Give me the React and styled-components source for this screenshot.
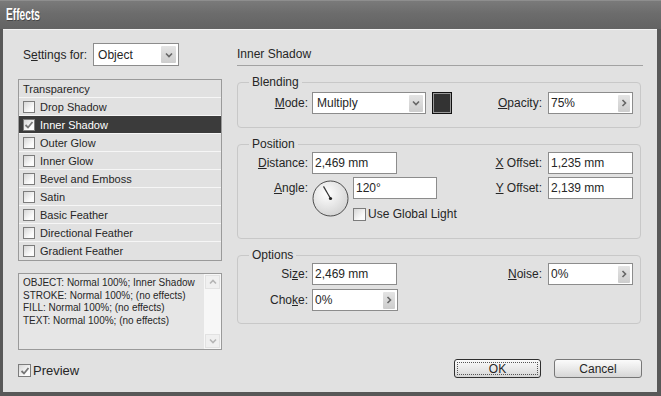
import React from "react";
import styled, { createGlobalStyle } from "styled-components";

const GlobalStyle = createGlobalStyle`
  html, body { margin: 0; padding: 0; background: #fff; }
  body {
    font-family: "Liberation Sans", Arial, sans-serif;
    font-size: 12px;
    color: #262626;
  }
  * { box-sizing: border-box; }
`;

const Window = styled.div`
  width: 661px;
  height: 396px;
  display: flex;
  flex-direction: column;
  background: #585858;
  overflow: hidden;
`;

const TitleBar = styled.div`
  height: 29px;
  flex: none;
  display: flex;
  align-items: center;
  padding-left: 6px;
  border-top: 1px solid #8e8e8e;
  background: linear-gradient(#7a7a7a 0, #6c6c6c 45%, #636363 100%);
`;

const Title = styled.span`
  display: inline-block;
  color: #fff;
  font-weight: bold;
  font-size: 17px;
  transform: scaleX(0.6);
  transform-origin: left center;
  text-shadow: 1px 1px 0 rgba(0, 0, 0, 0.35);
`;

const Body = styled.div`
  flex: 1;
  margin: 0 4px 4px 3px;
  background: #e1e1e1;
  border-top: 1px solid #f3f3f3;
  display: flex;
  gap: 15px;
  padding: 13px 14px 0 15px;
`;

const LeftPane = styled.div`
  width: 204px;
  display: flex;
  flex-direction: column;
`;

const SettingsRow = styled.div`
  height: 23px;
  display: flex;
  align-items: center;
  gap: 6px;
  padding-left: 5px;
`;

const SelectBox = styled.div`
  width: ${(p) => p.$w}px;
  height: ${(p) => p.$h || 22}px;
  display: flex;
  align-items: center;
  padding-left: 4px;
  padding-right: 2px;
  background: #fff;
  border: 1px solid #8c8c8c;
`;

const Value = styled.span`
  flex: 1;
  white-space: nowrap;
`;

const ArrowBtn = styled.span`
  width: ${(p) => p.$w || 14}px;
  height: 17px;
  display: flex;
  align-items: center;
  justify-content: center;
  background: linear-gradient(#e4e4e4, #cdcdcd);
  border-radius: 1px;
`;

const List = styled.div`
  margin-top: 13px;
  border: 1px solid #9a9a9a;
  background: #e1e1e1;
`;

const ListRow = styled.div`
  height: 18px;
  display: flex;
  align-items: center;
  gap: 5px;
  padding-left: 4px;
  font-size: 11px;
  border-bottom: 1px solid #f6f6f6;
  background: ${(p) => (p.$active ? "#3b3b3b" : "transparent")};
  color: ${(p) => (p.$active ? "#fff" : "#262626")};
  &:last-child { border-bottom: none; }
`;

const Box = styled.span`
  width: ${(p) => p.$size || 12}px;
  height: ${(p) => p.$size || 12}px;
  flex: none;
  display: flex;
  align-items: center;
  justify-content: center;
  border: 1px solid #7c7c7c;
  background: linear-gradient(135deg, #d6d6d6, #fbfbfb 70%);
`;

const Summary = styled.div`
  margin-top: 12px;
  height: 77px;
  border: 1px solid #9a9a9a;
  display: flex;
`;

const SummaryText = styled.div`
  flex: 1;
  padding: 3px 4px;
  font-size: 10px;
  line-height: 12.5px;
  background: #e6e6e6;
  white-space: nowrap;
`;

const ScrollBar = styled.div`
  width: 17px;
  background: #f7f7f7;
  display: flex;
  flex-direction: column;
  justify-content: space-between;
  padding: 1px 1px;
`;

const ScrollBtn = styled.span`
  height: 14px;
  display: flex;
  align-items: center;
  justify-content: center;
  background: #f0f0f0;
  border: 1px solid #e2e2e2;
`;

const PreviewRow = styled.label`
  margin-top: 13px;
  display: flex;
  align-items: center;
  gap: 2px;
  font-size: 13px;
`;

const RightPane = styled.div`
  width: 406px;
  display: flex;
  flex-direction: column;
  padding-bottom: 14px;
`;

const Heading = styled.div`
  padding: 4px 0 4px;
  line-height: 14px;
  border-bottom: 1px solid #a2a2a2;
`;

const Group = styled.fieldset`
  margin: 9px 2px 0 0;
  border: 1px solid #c8c8c8;
  border-radius: 4px;
  padding: ${(p) => p.$pad};
  min-width: 0;
`;

const Legend = styled.legend`
  margin-left: 11px;
  padding: 0 3px;
  line-height: 14px;
`;

const Row = styled.div`
  display: flex;
  align-items: flex-start;
  margin-top: ${(p) => p.$mt || 0}px;
`;

const Label = styled.span`
  width: 70px;
  height: 22px;
  line-height: 22px;
  margin-right: 4px;
  text-align: right;
  white-space: nowrap;
`;

const RightLabel = styled.span`
  margin-left: auto;
  margin-right: 6px;
  height: 22px;
  line-height: 22px;
  white-space: nowrap;
`;

const Input = styled.div`
  width: ${(p) => p.$w || 85}px;
  height: 22px;
  display: flex;
  align-items: center;
  padding-left: 2px;
  padding-right: 2px;
  background: #fff;
  border: 1px solid #8c8c8c;
`;

const Swatch = styled.span`
  width: 20px;
  height: 22px;
  margin-left: 6px;
  border: 1px solid #111;
  box-shadow: inset 0 0 0 1px #9a9a9a;
  background: #333;
`;

const DialWrap = styled.span`
  margin-top: 3px;
  width: 37px;
  height: 37px;
`;

const AngleCol = styled.div`
  margin-left: 4px;
  display: flex;
  flex-direction: column;
`;

const CheckRow = styled.label`
  margin-top: 8px;
  display: flex;
  align-items: center;
  gap: 2px;
`;

const Buttons = styled.div`
  margin-top: auto;
  display: flex;
  justify-content: flex-end;
  gap: 13px;
  padding-right: 1px;
`;

const Button = styled.button`
  width: ${(p) => p.$w}px;
  height: 19px;
  font-family: inherit;
  font-size: 12px;
  color: #262626;
  border: 1px solid ${(p) => (p.$default ? "#2e2e2e" : "#777")};
  border-radius: 3px;
  background: linear-gradient(#fbfbfb, #e6e6e6 60%, #d6d6d6);
  outline: ${(p) => (p.$default ? "1px dotted #555" : "none")};
  outline-offset: -4px;
  padding: 0;
`;

const Chevron = ({ dir = "down", color = "#666" }) => (
  <svg width="8" height="8" viewBox="0 0 8 8">
    <path
      d={
        dir === "down"
          ? "M1 2.5 L4 5.5 L7 2.5"
          : dir === "up"
          ? "M1 5.5 L4 2.5 L7 5.5"
          : "M2.5 1 L5.5 4 L2.5 7"
      }
      fill="none"
      stroke={color}
      strokeWidth="1.6"
    />
  </svg>
);

const Check = () => (
  <svg width="10" height="10" viewBox="0 0 10 10">
    <path d="M1.5 5 L4 7.5 L8.5 2" fill="none" stroke="#777" strokeWidth="1.8" />
  </svg>
);

const Checkbox = ({ checked, size }) => (
  <Box $size={size}>{checked && <Check />}</Box>
);

const Dial = () => (
  <DialWrap>
    <svg width="37" height="37" viewBox="0 0 37 37">
      <defs>
        <radialGradient id="dialFill" cx="40%" cy="35%" r="70%">
          <stop offset="0" stopColor="#ffffff" />
          <stop offset="1" stopColor="#d2d2d2" />
        </radialGradient>
      </defs>
      <circle cx="18.5" cy="18.5" r="17.5" fill="url(#dialFill)" stroke="#4d4d4d" strokeWidth="1" />
      <line x1="18.5" y1="18.5" x2="11.5" y2="6.4" stroke="#333" strokeWidth="1.2" />
      <circle cx="18.5" cy="18.5" r="1.6" fill="#222" />
    </svg>
  </DialWrap>
);

const SpinInput = ({ value, w }) => (
  <Input $w={w}>
    <Value>{value}</Value>
    <ArrowBtn $w={12}>
      <Chevron dir="right" />
    </ArrowBtn>
  </Input>
);

const effects = [
  "Drop Shadow",
  "Inner Shadow",
  "Outer Glow",
  "Inner Glow",
  "Bevel and Emboss",
  "Satin",
  "Basic Feather",
  "Directional Feather",
  "Gradient Feather",
];

export default function App() {
  return (
    <>
      <GlobalStyle />
      <Window>
        <TitleBar>
          <Title>Effects</Title>
        </TitleBar>
        <Body>
          <LeftPane>
            <SettingsRow>
              <span>
                S<u>e</u>ttings for:
              </span>
              <SelectBox $w={86} $h={23}>
                <Value>Object</Value>
                <ArrowBtn $w={15}>
                  <Chevron />
                </ArrowBtn>
              </SelectBox>
            </SettingsRow>
            <List>
              <ListRow>Transparency</ListRow>
              {effects.map((name) => (
                <ListRow key={name} $active={name === "Inner Shadow"}>
                  <Checkbox checked={name === "Inner Shadow"} />
                  {name}
                </ListRow>
              ))}
            </List>
            <Summary>
              <SummaryText>
                OBJECT: Normal 100%; Inner Shadow
                <br />
                STROKE: Normal 100%; (no effects)
                <br />
                FILL: Normal 100%; (no effects)
                <br />
                TEXT: Normal 100%; (no effects)
              </SummaryText>
              <ScrollBar>
                <ScrollBtn>
                  <Chevron dir="up" color="#b5b5b5" />
                </ScrollBtn>
                <ScrollBtn>
                  <Chevron dir="down" color="#b5b5b5" />
                </ScrollBtn>
              </ScrollBar>
            </Summary>
            <PreviewRow>
              <Checkbox checked size={13} />
              Preview
            </PreviewRow>
          </LeftPane>

          <RightPane>
            <Heading>Inner Shadow</Heading>

            <Group $pad="3px 7px 13px 0">
              <Legend>Blending</Legend>
              <Row>
                <Label>
                  <u>M</u>ode:
                </Label>
                <SelectBox $w={114}>
                  <Value>Multiply</Value>
                  <ArrowBtn>
                    <Chevron />
                  </ArrowBtn>
                </SelectBox>
                <Swatch />
                <RightLabel>
                  <u>O</u>pacity:
                </RightLabel>
                <SpinInput value="75%" />
              </Row>
            </Group>

            <Group $pad="1px 7px 17px 0">
              <Legend>Position</Legend>
              <Row>
                <Label>
                  <u>D</u>istance:
                </Label>
                <Input>2,469 mm</Input>
                <RightLabel>
                  <u>X</u> Offset:
                </RightLabel>
                <Input>1,235 mm</Input>
              </Row>
              <Row $mt={3}>
                <Label>
                  <u>A</u>ngle:
                </Label>
                <Dial />
                <AngleCol>
                  <Input $w={84}>120°</Input>
                  <CheckRow>
                    <Checkbox size={13} />
                    Use Global Light
                  </CheckRow>
                </AngleCol>
                <RightLabel>
                  <u>Y</u> Offset:
                </RightLabel>
                <Input>2,139 mm</Input>
              </Row>
            </Group>

            <Group $pad="1px 7px 12px 0">
              <Legend>Options</Legend>
              <Row>
                <Label>
                  Si<u>z</u>e:
                </Label>
                <Input>2,469 mm</Input>
                <RightLabel>
                  <u>N</u>oise:
                </RightLabel>
                <SpinInput value="0%" />
              </Row>
              <Row $mt={4}>
                <Label>
                  Cho<u>k</u>e:
                </Label>
                <SpinInput value="0%" w={86} />
              </Row>
            </Group>

            <Buttons>
              <Button $w={87} $default>
                OK
              </Button>
              <Button $w={88}>Cancel</Button>
            </Buttons>
          </RightPane>
        </Body>
      </Window>
    </>
  );
}
